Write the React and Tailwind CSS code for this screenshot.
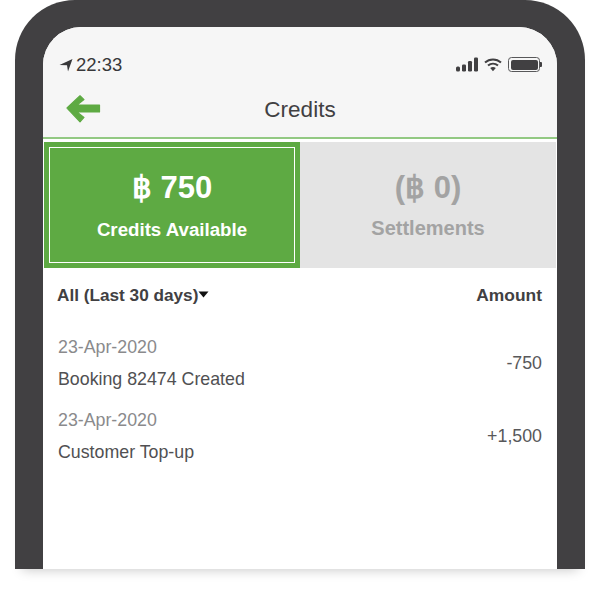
export default function App() {
  return (
    <div className="w-[600px] h-[600px] bg-white overflow-hidden font-['Liberation_Sans',sans-serif]">
      <div className="ml-[15px] w-[570px] h-[568.5px] bg-[#414042] rounded-t-[60px] pt-[27px] px-[28px] shadow-[0_8px_12px_-7px_rgba(0,0,0,0.22)]">
        <div className="h-full bg-white rounded-t-[38px] overflow-hidden flex flex-col">
          <div className="h-[112px] bg-[#f6f6f6] border-b-2 border-[#93c983] flex flex-col shrink-0">
            <div className="h-[45px] shrink-0 flex items-end justify-between pl-[16px] pr-[15px]">
              <div className="flex items-center gap-[3px] translate-y-[3px]">
                <svg width="14" height="14" viewBox="0 0 14 14"><path d="M0.5 7 L13.5 1 L9 13.5 L8 7.2 Z" fill="#38383a" /></svg>
                <span className="text-[18.5px] leading-[20px] text-[#38383a]">22:33</span>
              </div>
              <div className="flex items-center gap-[5px]">
                <svg width="23" height="15" viewBox="0 0 23 15">
                  <rect x="0" y="9.5" width="4" height="5" rx="1.5" fill="#414042" />
                  <rect x="6" y="7.5" width="4" height="7" rx="1.2" fill="#414042" />
                  <rect x="12" y="4" width="4" height="10.5" rx="1.2" fill="#414042" />
                  <rect x="18" y="0.5" width="4" height="14" rx="1.2" fill="#414042" />
                </svg>
                <svg width="18" height="14" viewBox="0 0 18 14">
                  <path d="M1 4.6 C5.5 0.4 12.5 0.4 17 4.6" stroke="#414042" strokeWidth="2" fill="none" />
                  <path d="M4 7.6 C7 5 11 5 14 7.6" stroke="#414042" strokeWidth="2" fill="none" />
                  <path d="M6.2 10 C8 8.6 10 8.6 11.8 10 L9 13.2 Z" fill="#414042" />
                </svg>
                <div className="flex items-center ml-[1px]">
                  <div className="w-[32px] h-[15px] rounded-[3.5px] border border-[#58585a] p-[1.5px]">
                    <div className="w-full h-full bg-[#414042] rounded-[2px]" />
                  </div>
                  <div className="w-[2px] h-[5px] bg-[#414042] rounded-r-[1px]" />
                </div>
              </div>
            </div>
            <div className="flex-1 relative flex items-center justify-center pt-[10px]">
              <svg className="absolute left-[23px] top-[22px]" width="35" height="30" viewBox="0 0 35 30">
                <path d="M1 14 L14 1.8 L18 5.6 L11 11 L33.5 11 L33.5 18 L11 18 L18 23.4 L14 27.8 Z" fill="#5eaa43" stroke="#5eaa43" strokeWidth="1.2" strokeLinejoin="round" />
              </svg>
              <span className="text-[22.5px] leading-[26px] text-[#414042]">Credits</span>
            </div>
          </div>
          <div className="flex h-[126px] mt-[3px] mx-[1px] shrink-0">
            <div className="w-[256px] bg-[#5eaa43] p-[5px] shrink-0">
              <div className="h-full border border-white flex flex-col items-center text-white font-bold">
                <span className="text-[31px] leading-[34px] mt-[23px]">฿ 750</span>
                <span className="text-[18.7px] leading-[22px] mt-[14px]">Credits Available</span>
              </div>
            </div>
            <div className="flex-1 bg-[#e4e4e4] flex flex-col items-center text-[#a3a3a3] font-bold">
              <span className="text-[31px] leading-[34px] mt-[29px]">(฿ 0)</span>
              <span className="text-[20px] leading-[22px] mt-[12px]">Settlements</span>
            </div>
          </div>
          <div className="flex justify-between items-center pl-[14px] pr-[15px] mt-[17px] leading-[20px] font-bold text-[#414042]">
            <div className="flex items-center text-[17.2px]">
              <span>All (Last 30 days)</span>
              <svg width="11" height="7" viewBox="0 0 11 7" className="mb-[1px]"><path d="M0.5 0.5 H10.5 L5.5 6.5 Z" fill="#111" /></svg>
            </div>
            <span className="text-[17.4px]">Amount</span>
          </div>
          <div className="flex flex-col gap-[20.5px] mt-[32px] pl-[15px] pr-[15px] text-[17.8px] leading-[20px]">
            <Row date="23-Apr-2020" label="Booking 82474 Created" amount="-750" />
            <Row date="23-Apr-2020" label="Customer Top-up" amount="+1,500" />
          </div>
        </div>
      </div>
    </div>
  );
}

function Row({ date, label, amount }) {
  return (
    <div className="flex justify-between items-center h-[52px]">
      <div className="flex flex-col gap-[12px]">
        <span className="text-[#8a8a8c]">{date}</span>
        <span className="text-[#505052]">{label}</span>
      </div>
      <span className="text-[#58585a]">{amount}</span>
    </div>
  );
}
